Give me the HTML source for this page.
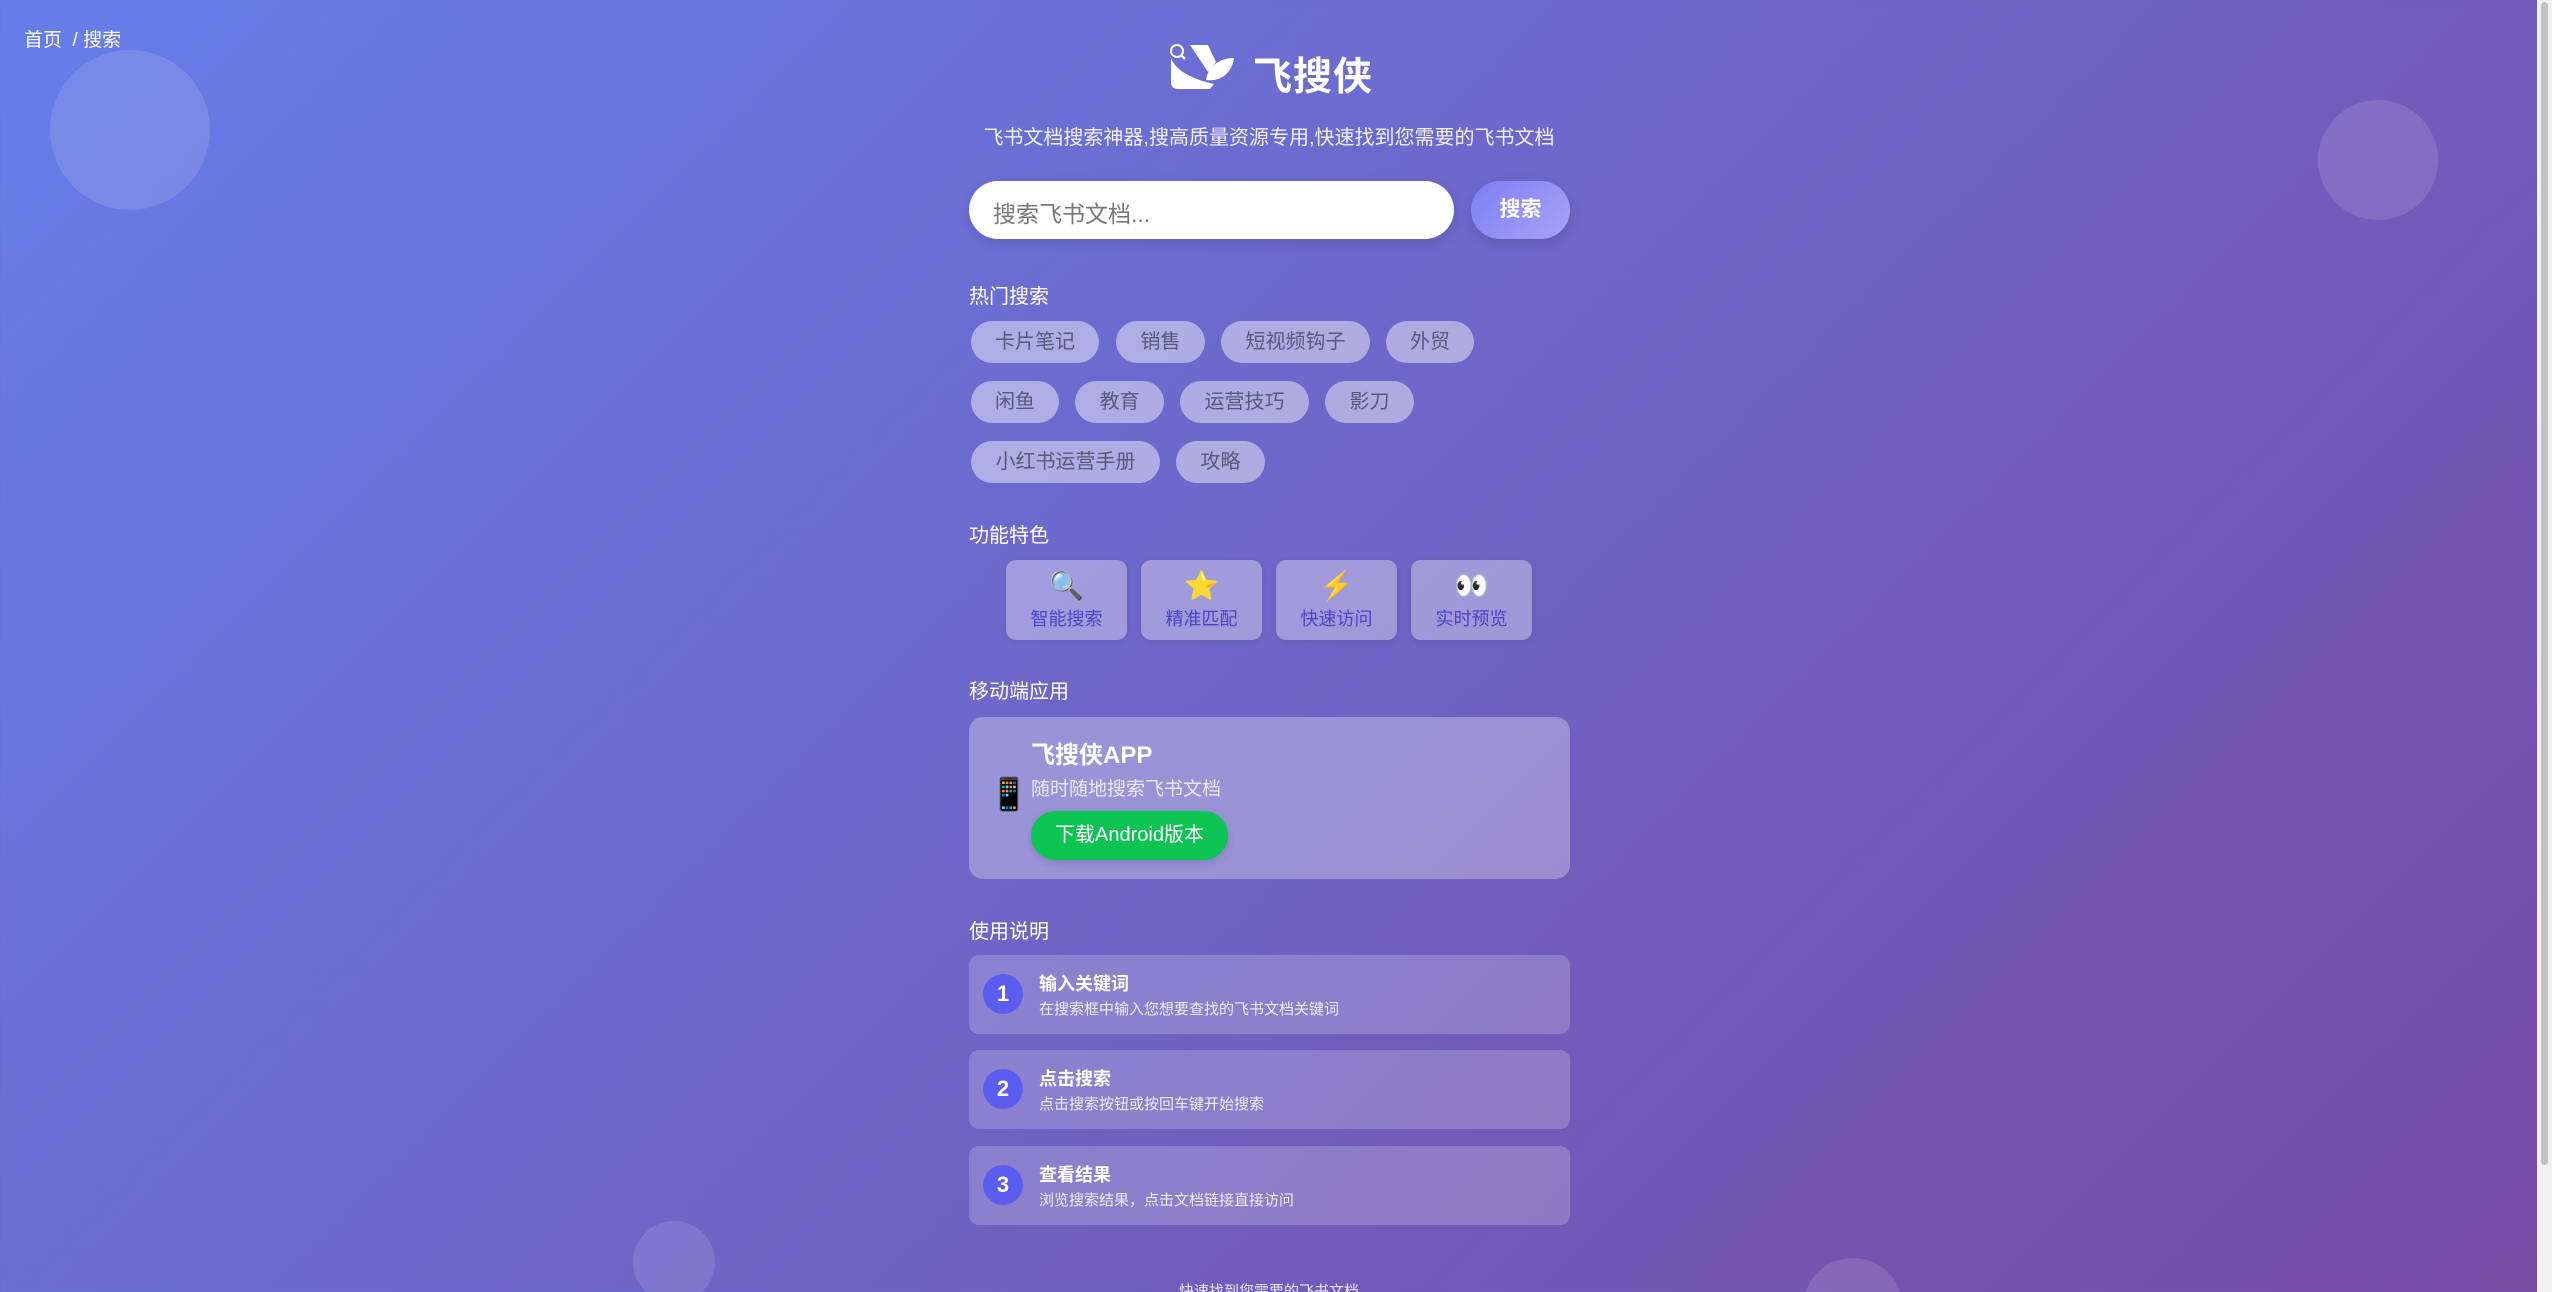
<!DOCTYPE html>
<html><head><meta charset="utf-8">
<style>
*{margin:0;padding:0;box-sizing:border-box}
html,body{width:2552px;height:1292px;overflow:hidden}
body{font-family:"Liberation Sans","Noto Sans CJK SC",sans-serif;background:linear-gradient(135deg,#667eea 0%,#764ba2 100%);position:relative;color:#fff}
.circ{position:absolute;border-radius:50%;background:rgba(255,255,255,0.12)}
.abs{position:absolute}
.crumb{left:24px;top:25px;font-size:19px;color:#fff}
.title{left:1253px;top:46px;font-size:39px;font-weight:bold;letter-spacing:1px}
.sub{left:969px;width:600px;top:121px;text-align:center;font-size:20px;color:rgba(255,255,255,0.9)}
.input{left:969px;top:181px;width:485px;height:58px;background:#fff;border-radius:29px;box-shadow:0 4px 12px rgba(0,0,0,0.12);font-size:23px;color:#777;padding:14px 24px}
.btn{left:1471px;top:181px;width:99px;height:58px;border-radius:29px;background:linear-gradient(135deg,#7d7ef5,#a9a4f5);font-size:21px;font-weight:bold;text-align:center;line-height:58px;box-shadow:0 4px 12px rgba(0,0,0,0.12)}
.lbl{left:969px;font-size:20px}
.tag{position:absolute;height:42px;line-height:42px;border-radius:21px;background:rgba(255,255,255,0.45);color:#555a7a;font-size:20px;text-align:center}
.feat{position:absolute;top:560px;width:121px;height:80px;border-radius:10px;background:rgba(255,255,255,0.35);text-align:center;box-shadow:0 2px 6px rgba(0,0,0,0.08)}
.feat .e{font-size:28px;line-height:28px;margin-top:12px;font-family:"Noto Color Emoji","DejaVu Sans",sans-serif}
.feat .t{font-size:18px;color:#4b44c8;margin-top:5px}
.app{left:969px;top:717px;width:601px;height:162px;border-radius:14px;background:rgba(255,255,255,0.3)}
.step{position:absolute;left:969px;width:601px;height:79px;border-radius:10px;background:rgba(255,255,255,0.2)}
.step .n{position:absolute;left:14px;top:19px;width:40px;height:40px;border-radius:50%;background:#5b5cf0;font-weight:bold;font-size:22px;text-align:center;line-height:40px}
.step .h{position:absolute;left:70px;top:15px;font-size:18px;font-weight:bold}
.step .d{position:absolute;left:70px;top:43px;font-size:15px;color:rgba(255,255,255,0.85)}
.sb{position:absolute;left:2537px;top:0;width:15px;height:1292px;background:#f1f1f1}
.sb div{position:absolute;left:4px;top:2px;width:7px;height:1163px;background:#c1c1c1;border-radius:4px}
</style></head><body>
<div class="circ" style="left:50px;top:50px;width:160px;height:160px"></div>
<div class="circ" style="left:2318px;top:100px;width:120px;height:120px"></div>
<div class="circ" style="left:633px;top:1221px;width:82px;height:82px"></div>
<div class="circ" style="left:1803px;top:1258px;width:100px;height:100px"></div>

<div class="abs crumb">首页 &nbsp;/ 搜索</div>

<svg class="abs" style="left:1168px;top:42px" width="68" height="48" viewBox="0 0 68 48">
<circle cx="9" cy="9" r="6" fill="none" stroke="#fff" stroke-width="2"/>
<line x1="13" y1="13" x2="17" y2="17" stroke="#fff" stroke-width="2.5"/>
<path d="M22 3 L40 3 L48 20 L40 30 Z" fill="#fff"/>
<path d="M3 16 C8 30 28 38 46 42 L42 47 L10 47 C5 47 3 44 3 40 Z" fill="#fff"/>
<path d="M38 38 C40 24 52 16 66 16 C64 30 54 40 38 38 Z" fill="#fff"/>
</svg>
<div class="abs title">飞搜侠</div>
<div class="abs sub">飞书文档搜索神器,搜高质量资源专用,快速找到您需要的飞书文档</div>

<div class="abs input">搜索飞书文档...</div>
<div class="abs btn">搜索</div>

<div class="abs lbl" style="top:280px">热门搜索</div>
<div class="tag" style="left:971px;top:321px;width:128px">卡片笔记</div>
<div class="tag" style="left:1116px;top:321px;width:89px">销售</div>
<div class="tag" style="left:1221px;top:321px;width:149px">短视频钩子</div>
<div class="tag" style="left:1386px;top:321px;width:88px">外贸</div>
<div class="tag" style="left:971px;top:381px;width:88px">闲鱼</div>
<div class="tag" style="left:1075px;top:381px;width:89px">教育</div>
<div class="tag" style="left:1180px;top:381px;width:129px">运营技巧</div>
<div class="tag" style="left:1325px;top:381px;width:89px">影刀</div>
<div class="tag" style="left:971px;top:441px;width:189px">小红书运营手册</div>
<div class="tag" style="left:1176px;top:441px;width:89px">攻略</div>

<div class="abs lbl" style="top:519px">功能特色</div>
<div class="feat" style="left:1006px"><div class="e">🔍</div><div class="t">智能搜索</div></div>
<div class="feat" style="left:1141px"><div class="e">⭐</div><div class="t">精准匹配</div></div>
<div class="feat" style="left:1276px"><div class="e">⚡</div><div class="t">快速访问</div></div>
<div class="feat" style="left:1411px"><div class="e">👀</div><div class="t">实时预览</div></div>

<div class="abs lbl" style="top:675px">移动端应用</div>
<div class="abs app">
 <div class="abs" style="left:20px;top:58px;font-size:32px;font-family:'Noto Color Emoji','DejaVu Sans',sans-serif">📱</div>
 <div class="abs" style="left:62px;top:18px;font-size:24px;font-weight:bold">飞搜侠APP</div>
 <div class="abs" style="left:62px;top:57px;font-size:19px;color:rgba(255,255,255,0.8)">随时随地搜索飞书文档</div>
 <div class="abs" style="left:62px;top:94px;width:197px;height:49px;border-radius:25px;background:#0bc452;font-size:20px;text-align:center;line-height:49px;box-shadow:0 3px 8px rgba(0,0,0,0.12)">下载Android版本</div>
</div>

<div class="abs lbl" style="top:915px">使用说明</div>
<div class="step" style="top:955px"><div class="n">1</div><div class="h">输入关键词</div><div class="d">在搜索框中输入您想要查找的飞书文档关键词</div></div>
<div class="step" style="top:1050px"><div class="n">2</div><div class="h">点击搜索</div><div class="d">点击搜索按钮或按回车键开始搜索</div></div>
<div class="step" style="top:1146px"><div class="n">3</div><div class="h">查看结果</div><div class="d">浏览搜索结果，点击文档链接直接访问</div></div>

<div class="abs" style="left:969px;width:600px;top:1280px;text-align:center;font-size:15px;color:rgba(255,255,255,0.85)">快速找到您需要的飞书文档</div>

<div class="sb"><div></div></div>
</body></html>
